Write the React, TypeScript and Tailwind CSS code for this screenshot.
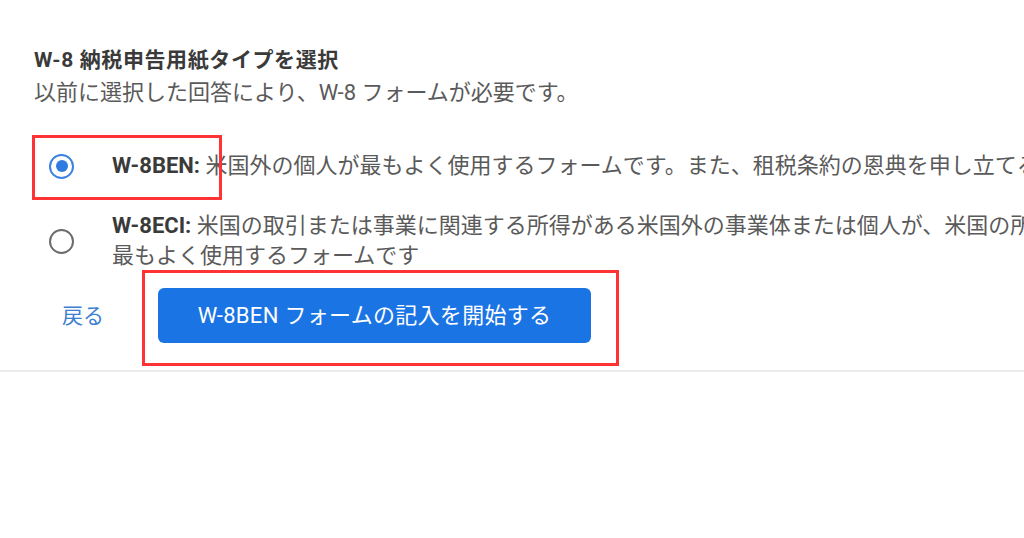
import React from "react";

const font = { fontFamily: 'Roboto, "Noto Sans CJK JP", "Noto Sans", sans-serif' };

function Radio({ checked }: { checked: boolean }) {
  return checked ? (
    <div className="w-[25px] h-[25px] shrink-0 rounded-full border-[2.5px] border-[#3b82e0] flex items-center justify-center">
      <div className="w-[12px] h-[12px] rounded-full bg-[#2f7be0]" />
    </div>
  ) : (
    <div className="w-[25px] h-[25px] shrink-0 rounded-full border-[2.5px] border-[#6b6b6b]" />
  );
}

export default function App() {
  return (
    <div
      className="relative w-[1024px] h-[538px] bg-white overflow-hidden"
      style={font}
    >
      <div className="pt-[46px]">
        <div className="pl-[34px]">
          <div className="text-[21px] leading-[28px] font-bold text-[#3a3a3a] tracking-[0.6px]">
            W-8 納税申告用紙タイプを選択
          </div>
          <div className="text-[22px] leading-[38px] text-[#5a5a5a]">
            以前に選択した回答により、W-8 フォームが必要です。
          </div>
        </div>

        <div className="mt-[39px] pl-[49px] flex items-center whitespace-nowrap">
          <Radio checked />
          <div className="ml-[38px] text-[22px] leading-[30px] text-[#5a5a5a]">
            <span className="font-bold text-[#3a3a3a]">W-8BEN:</span> 米国外の個人が最もよく使用するフォームです。また、租税条約の恩典を申し立てる場合にも使用します。
          </div>
        </div>

        <div className="mt-[30px] pl-[49px] flex items-center whitespace-nowrap">
          <Radio checked={false} />
          <div className="ml-[38px] text-[22px] leading-[30px] text-[#5a5a5a]">
            <div>
              <span className="font-bold text-[#3a3a3a]">W-8ECI:</span> 米国の取引または事業に関連する所得がある米国外の事業体または個人が、米国の所得を申告する際に
            </div>
            <div>最もよく使用するフォームです</div>
          </div>
        </div>

        <div className="mt-[17px] pl-[62px] flex items-center">
          <button className="text-[21px] leading-[30px] text-[#3d7fd0]">戻る</button>
          <button className="ml-[54px] w-[433px] h-[55px] rounded-[6px] bg-[#1b74e4] text-white text-[22px] tracking-[0.3px] flex items-center justify-center">
            W-8BEN フォームの記入を開始する
          </button>
        </div>

        <div className="mt-[27px] h-[2px] bg-[#ececec]" />
      </div>

      <div className="absolute left-[32px] top-[135px] w-[190px] h-[65px] border-[3px] border-[#ff3333]" />
      <div className="absolute left-[142px] top-[270px] w-[477px] h-[96px] border-[3px] border-[#ff3333]" />
    </div>
  );
}
